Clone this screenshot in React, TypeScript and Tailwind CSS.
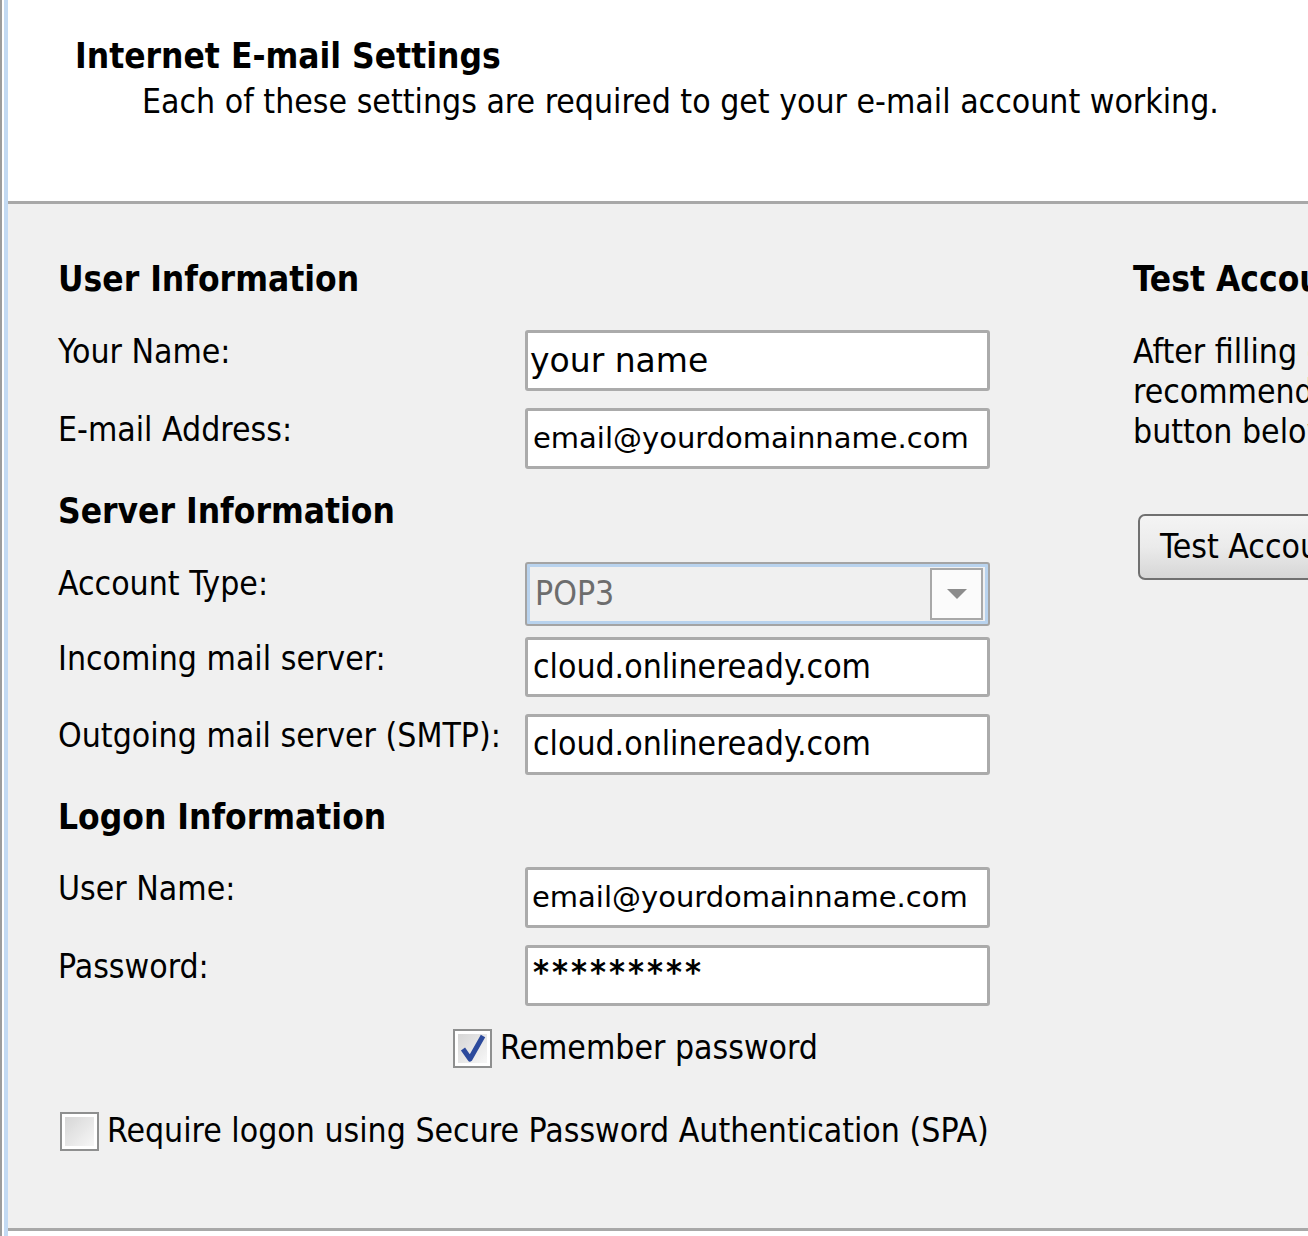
import React from "react";

const sans = "font-['DejaVu_Sans_Condensed','DejaVu_Sans',sans-serif]";
const verdana = "font-['DejaVu_Sans','Verdana',sans-serif]";

function Label({ children }: { children: React.ReactNode }) {
  return (
    <div className="w-[467px] shrink-0 pt-[2px] text-[33.5px] leading-[40px] text-black whitespace-nowrap">
      {children}
    </div>
  );
}

function Box({ children, h = "h-[61px]" }: { children: React.ReactNode; h?: string }) {
  return (
    <div className={`${h} w-[465px] rounded-[3px] border-[3px] border-[#ababab] bg-white flex items-center pl-[2px] overflow-hidden whitespace-nowrap`}>
      {children}
    </div>
  );
}

function Heading({ children }: { children: React.ReactNode }) {
  return <div className="text-[35px] leading-[40px] font-bold text-black whitespace-nowrap">{children}</div>;
}

function Checkbox({ checked }: { checked?: boolean }) {
  return (
    <div className="w-[39px] h-[39px] shrink-0 border-2 border-[#8e8f8f] bg-white p-[3px]">
      <div className="w-full h-full bg-gradient-to-br from-[#d6d6d6] to-[#f7f7f7] flex items-center justify-center">
        {checked && (
          <svg width="26" height="28" viewBox="0 0 26 28">
            <path d="M3 15 L10 25 L23 2" fill="none" stroke="#2c4a9c" strokeWidth="5" strokeLinejoin="round" />
          </svg>
        )}
      </div>
    </div>
  );
}

export default function App() {
  return (
    <div className={`w-[1308px] h-[1236px] flex overflow-hidden bg-white ${sans}`}>
      <div className="w-[2px] bg-[#9c9c9c]" />
      <div className="w-[2px] bg-white" />
      <div className="w-[4px] bg-[#c3daf3]" />
      <div className="flex-1 min-w-0 flex flex-col">
        <div className="h-[201px] bg-white pt-[36px]">
          <div className="pl-[67px] text-[35px] leading-[40px] font-bold text-black whitespace-nowrap">
            Internet E-mail Settings
          </div>
          <div className="pl-[134px] mt-[6px] text-[33.5px] leading-[40px] text-black whitespace-nowrap">
            Each of these settings are required to get your e-mail account working.
          </div>
        </div>
        <div className="h-[3px] bg-[#a8a8a8]" />
        <div className="flex-1 bg-[#f0f0f0] flex pl-[50px] pt-[55px]">
          <div className="w-[932px] shrink-0 flex flex-col">
            <Heading>User Information</Heading>
            <div className="flex mt-[31px]">
              <Label>Your Name:</Label>
              <Box>
                <span className={`${verdana} text-[33px] text-black`}>your name</span>
              </Box>
            </div>
            <div className="flex mt-[17px]">
              <Label>E-mail Address:</Label>
              <Box>
                <span className={`${verdana} text-[29px] text-black pl-[3px]`}>email@yourdomainname.com</span>
              </Box>
            </div>

            <div className="mt-[22px]">
              <Heading>Server Information</Heading>
            </div>
            <div className="flex mt-[31px]">
              <Label>Account Type:</Label>
              <div className="h-[64px] w-[465px] rounded-[3px] border-2 border-[#a4a4a4] bg-[#b9d3ee] p-[3px]">
                <div className="h-full bg-[#f0f0f0] flex items-center justify-between pl-[5px] pr-[2px]">
                  <span className="text-[33.5px] text-[#6d6d6d]">POP3</span>
                  <div className="w-[53px] h-[52px] border-2 border-[#a8a8a8] bg-[#fbfbfb] flex items-center justify-center">
                    <svg width="22" height="12" viewBox="0 0 22 12">
                      <path d="M1 1 H21 L11 11 Z" fill="#8c8c8c" />
                    </svg>
                  </div>
                </div>
              </div>
            </div>
            <div className="flex mt-[11px]">
              <Label>Incoming mail server:</Label>
              <Box h="h-[60px]">
                <span className="text-[33.5px] text-black pl-[3px]">cloud.onlineready.com</span>
              </Box>
            </div>
            <div className="flex mt-[17px]">
              <Label>Outgoing mail server (SMTP):</Label>
              <Box>
                <span className="text-[33.5px] text-black pl-[3px]">cloud.onlineready.com</span>
              </Box>
            </div>

            <div className="mt-[22px]">
              <Heading>Logon Information</Heading>
            </div>
            <div className="flex mt-[30px]">
              <Label>User Name:</Label>
              <Box>
                <span className={`${verdana} text-[29px] text-black pl-[2px]`}>email@yourdomainname.com</span>
              </Box>
            </div>
            <div className="flex mt-[17px]">
              <Label>Password:</Label>
              <Box>
                <span className="text-[34px] font-bold text-black pl-[3px] tracking-[3px] -mt-[6px]">*********</span>
              </Box>
            </div>

            <div className="flex items-center mt-[22px] ml-[395px] gap-[8px]">
              <Checkbox checked />
              <span className="text-[33.5px] leading-[40px] text-black whitespace-nowrap">Remember password</span>
            </div>
            <div className="flex items-center mt-[43px] ml-[2px] gap-[8px]">
              <Checkbox />
              <span className="text-[33.5px] leading-[40px] text-black whitespace-nowrap">
                Require logon using Secure Password Authentication (SPA)
              </span>
            </div>
          </div>

          <div className="ml-[143px] w-[640px] shrink-0 flex flex-col">
            <Heading>Test Account Settings</Heading>
            <div className="mt-[33px] text-[33.5px] leading-[40px] text-black whitespace-nowrap">
              <div>After filling out the information on this screen, we</div>
              <div>recommend you test your account by clicking the</div>
              <div>button below. (Requires network connection)</div>
            </div>
            <div className="mt-[62px] ml-[5px] h-[66px] w-[420px] rounded-[7px] border-2 border-[#707070] bg-gradient-to-b from-[#f4f4f4] via-[#ebebeb] to-[#d6d6d6] flex items-center pl-[20px]">
              <span className="text-[33.5px] text-black whitespace-nowrap">Test Account Settings ...</span>
            </div>
          </div>
        </div>
        <div className="h-[3px] bg-[#a8a8a8]" />
        <div className="h-[5px] bg-white" />
      </div>
    </div>
  );
}
